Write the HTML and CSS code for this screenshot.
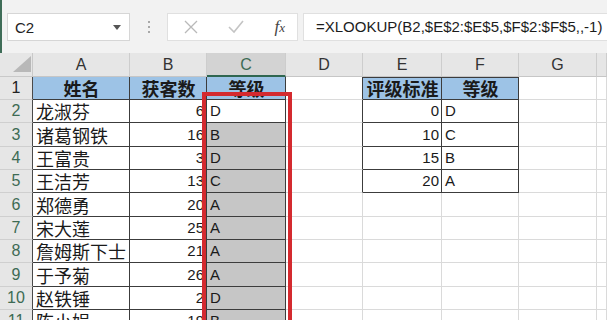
FILE: index.html
```
<!DOCTYPE html>
<html lang="zh-CN">
<head>
<meta charset="utf-8">
<title>XLOOKUP</title>
<link rel="stylesheet" href="styles.css">
</head>
<body>
<div class="app">
  <div class="toolbar">
    <div class="namebox">
      <span class="ref">C2</span>
      <svg class="dd" width="8" height="5" viewBox="0 0 8 5"><path d="M0 0 L8 0 L4 5 Z" fill="#555"/></svg>
    </div>
    <div class="grip"><i></i><i></i><i></i></div>
    <div class="fbtns">
      <svg class="ico" width="14" height="14" viewBox="0 0 14 14"><path d="M1 1 L13 13 M13 1 L1 13" stroke="#b9b9b9" stroke-width="1.3" fill="none"/></svg>
      <svg class="ico" width="16" height="14" viewBox="0 0 16 14"><path d="M1 7 L6 12 L15 1" stroke="#c4c4c4" stroke-width="1.6" fill="none"/></svg>
      <span class="fx">f<span class="x">x</span></span>
    </div>
    <div class="formula">=XLOOKUP(B2,$E$2:$E$5,$F$2:$F$5,,-1)</div>
  </div>

  <div class="sheet">
    <div class="grid">
      <div class="corner"><svg width="18" height="16" viewBox="0 0 18 16"><path d="M18 0 L18 16 L0 16 Z" fill="#b8b8b8"/></svg></div>
      <div class="ch">A</div><div class="ch">B</div><div class="ch chs">C</div><div class="ch">D</div><div class="ch">E</div><div class="ch">F</div><div class="ch">G</div><div class="ch"></div>

      <div class="rh rt">1</div>
      <div class="c t hd">姓名</div><div class="c t hd">获客数</div><div class="c t hd">等级</div>
      <div class="c tr"></div><div class="c t hd tt">评级标准</div><div class="c t hd tt">等级</div><div class="c"></div><div class="c"></div>

      <div class="rh rt rs">2</div>
      <div class="c t zh">龙淑芬</div><div class="c t r">6</div><div class="c t">D</div>
      <div class="c tr"></div><div class="c t r">0</div><div class="c t">D</div><div class="c"></div><div class="c"></div>

      <div class="rh rt rs">3</div>
      <div class="c t zh">诸葛钢铁</div><div class="c t r">16</div><div class="c t sel">B</div>
      <div class="c tr"></div><div class="c t r">10</div><div class="c t">C</div><div class="c"></div><div class="c"></div>

      <div class="rh rt rs">4</div>
      <div class="c t zh">王富贵</div><div class="c t r">3</div><div class="c t sel">D</div>
      <div class="c tr"></div><div class="c t r">15</div><div class="c t">B</div><div class="c"></div><div class="c"></div>

      <div class="rh rt rs">5</div>
      <div class="c t zh">王洁芳</div><div class="c t r">13</div><div class="c t sel">C</div>
      <div class="c tr"></div><div class="c t r">20</div><div class="c t">A</div><div class="c"></div><div class="c"></div>

      <div class="rh rt rs">6</div>
      <div class="c t zh">郑德勇</div><div class="c t r">20</div><div class="c t sel">A</div>
      <div class="c"></div><div class="c"></div><div class="c"></div><div class="c"></div><div class="c"></div>

      <div class="rh rt rs">7</div>
      <div class="c t zh">宋大莲</div><div class="c t r">25</div><div class="c t sel">A</div>
      <div class="c"></div><div class="c"></div><div class="c"></div><div class="c"></div><div class="c"></div>

      <div class="rh rt rs">8</div>
      <div class="c t zh">詹姆斯下士</div><div class="c t r">21</div><div class="c t sel">A</div>
      <div class="c"></div><div class="c"></div><div class="c"></div><div class="c"></div><div class="c"></div>

      <div class="rh rt rs">9</div>
      <div class="c t zh">于予菊</div><div class="c t r">26</div><div class="c t sel">A</div>
      <div class="c"></div><div class="c"></div><div class="c"></div><div class="c"></div><div class="c"></div>

      <div class="rh rt rs">10</div>
      <div class="c t zh">赵铁锤</div><div class="c t r">2</div><div class="c t sel">D</div>
      <div class="c"></div><div class="c"></div><div class="c"></div><div class="c"></div><div class="c"></div>

      <div class="rh rt rs">11</div>
      <div class="c t zh">陈小娟</div><div class="c t r">19</div><div class="c t sel">B</div>
      <div class="c"></div><div class="c"></div><div class="c"></div><div class="c"></div><div class="c"></div>
    </div>
    <div class="mark"></div>
  </div>
</div>
</body>
</html>
```

FILE: styles.css
```
html, body {
  margin: 0;
  padding: 0;
  background: #ffffff;
}
body {
  width: 607px;
  height: 320px;
  overflow: hidden;
  font-family: "Liberation Sans", "Noto Sans CJK SC", sans-serif;
  color: #1a1a1a;
}
.app {
  width: 607px;
  height: 320px;
  overflow: hidden;
}
.toolbar {
  height: 53px;
  box-sizing: border-box;
  background: #f2f2f2;
  border-left: 2px solid #3f6d58;
  padding: 13px 0 0 5px;
  display: flex;
  align-items: flex-start;
}
.namebox {
  width: 123px;
  height: 28px;
  box-sizing: border-box;
  background: #fff;
  border: 1px solid #d6d6d6;
  display: flex;
  align-items: center;
  justify-content: space-between;
  padding: 0 8px 0 7px;
  font-size: 15px;
  color: #222;
}
.grip {
  width: 37px;
  height: 28px;
  display: flex;
  flex-direction: column;
  align-items: center;
  justify-content: center;
  gap: 3px;
}
.grip i {
  width: 2px;
  height: 2px;
  background: #a8a8a8;
  display: block;
}
.fbtns {
  width: 131px;
  height: 28px;
  box-sizing: border-box;
  background: #fff;
  border: 1px solid #e0e0e0;
  display: flex;
  align-items: center;
  padding: 0 12px 0 16px;
  justify-content: space-between;
}
.fx {
  font-family: "Liberation Serif", serif;
  font-style: italic;
  font-size: 17px;
  color: #444;
}
.fx .x {
  font-size: 13px;
}
.formula {
  margin-left: 5px;
  flex: 1;
  height: 28px;
  box-sizing: border-box;
  background: #fff;
  border: 1px solid #e0e0e0;
  border-right: none;
  padding-left: 12px;
  font-size: 15px;
  line-height: 26px;
  color: #1c1c1c;
  white-space: nowrap;
  overflow: hidden;
}
.sheet {
  position: relative;
}
.grid {
  display: grid;
  grid-template-columns: 33px 97px 77px 79px 77px 79px 77px 78px 10px;
  grid-template-rows: 24px 23px 23px 24px 23px 23px 24px 23px 23px 24px 23px 23px;
}
.corner {
  background: #e6e6e6;
  border-right: 1px solid #c9c9c9;
  border-bottom: 1px solid #c9c9c9;
  box-sizing: border-box;
  display: flex;
  align-items: flex-end;
  justify-content: flex-end;
  padding: 0 1px 4px 0;
}
.ch {
  background: #e6e6e6;
  border-right: 1px solid #cdcdcd;
  border-bottom: 1px solid #c6c6c6;
  box-sizing: border-box;
  text-align: center;
  font-size: 16px;
  line-height: 23px;
  color: #333;
}
.ch.chs {
  background: #d3d3d3;
  border-bottom: 2px solid #2f6650;
  color: #3d6b54;
}
.rh {
  background: #e6e6e6;
  border-right: 1px solid #c6c6c6;
  border-bottom: 1px solid #cfcfcf;
  box-sizing: border-box;
  font-size: 16px;
  line-height: 20px;
  display: flex;
  align-items: center;
  justify-content: center;
  color: #222;
}
.rh.rs {
  color: #3d6b54;
}
.rh.rt {
  border-right: 1px solid #4a4a4a;
}
.c {
  border-right: 1px solid #dadada;
  border-bottom: 1px solid #dadada;
  box-sizing: border-box;
  font-size: 15px;
  line-height: 20px;
  display: flex;
  align-items: center;
  padding: 0 2px 0 3px;
  white-space: nowrap;
  overflow: hidden;
}
.c.t {
  border-right-color: #3c3c3c;
  border-bottom-color: #3c3c3c;
}
.c.tr {
  border-right-color: #3c3c3c;
}
.c.tt {
  box-shadow: inset 0 1px 0 #3c3c3c;
}
.c.hd {
  background: #9dc3e6;
  font-family: "Noto Sans CJK SC", sans-serif;
  font-weight: 700;
  font-size: 18px;
  justify-content: center;
  color: #1a1a1a;
}
.c.zh {
  font-family: "Noto Sans CJK SC", sans-serif;
  font-size: 18px;
}
.c.r {
  justify-content: flex-end;
}
.c.sel {
  background: #c6c6c6;
}
.mark {
  position: absolute;
  left: 202px;
  top: 39px;
  width: 90px;
  height: 260px;
  box-sizing: border-box;
  border: 4px solid #d42a2f;
}
```
